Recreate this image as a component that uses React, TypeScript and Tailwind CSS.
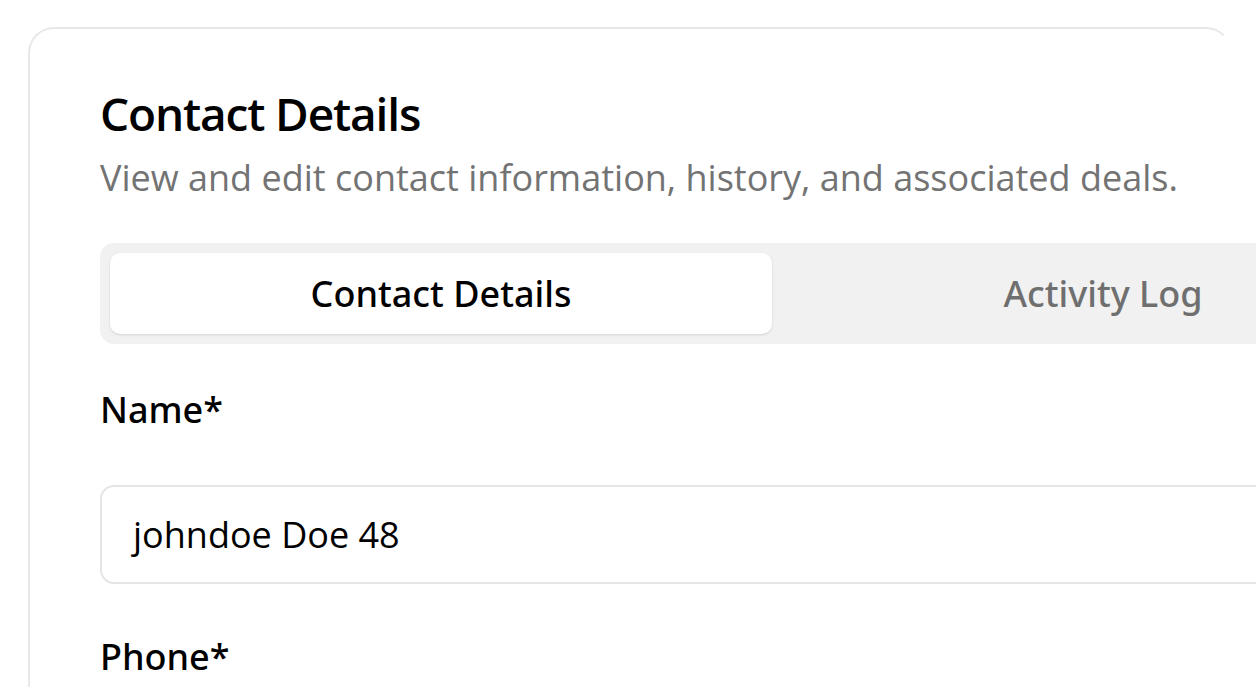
import React from 'react';

const font = { fontFamily: '"Open Sans", "Noto Sans", sans-serif' };

function Field({ label, value, className }: { label: string; value: string; className?: string }) {
  return (
    <div className={className}>
      <label className="block font-['Noto_Sans',sans-serif] text-[36px] font-medium leading-[36px] text-black">{label}</label>
      <div className="mt-[57px] flex h-[99px] w-[1344px] items-center rounded-[14px] border-2 border-[#e5e5e5] bg-white px-[31px] text-[36px] text-black">
        {value}
      </div>
    </div>
  );
}

export default function App() {
  return (
    <div className="h-[687px] w-[1256px] overflow-hidden bg-white pl-[28px] pt-[27px]" style={font}>
      <div className="h-[900px] w-[1204px] rounded-t-[26px] border-2 border-b-0 border-[#e8e8e8] border-r-transparent pl-[70px] pt-[61px]">
        <h1 className="text-[46px] font-semibold leading-[46px] tracking-tight text-black">Contact Details</h1>
        <p className="mt-[16px] text-[36px] leading-[52px] text-[#737373]">
          View and edit contact information, history, and associated deals.
        </p>
        <div className="mt-[39px] grid w-[1344px] grid-cols-2 rounded-[14px] bg-[#f1f1f1] p-[10px] font-['Noto_Sans',sans-serif]">
          <div className="flex h-[81px] items-center justify-center rounded-[10px] bg-white text-[36px] font-medium text-black shadow-sm">
            Contact Details
          </div>
          <div className="flex h-[81px] items-center justify-center text-[36px] font-medium text-[#6f6f6f]">
            Activity Log
          </div>
        </div>
        <Field className="mt-[48px]" label="Name*" value="johndoe Doe 48" />
        <Field className="mt-[55px]" label="Phone*" value="+1 555 0148" />
      </div>
    </div>
  );
}
